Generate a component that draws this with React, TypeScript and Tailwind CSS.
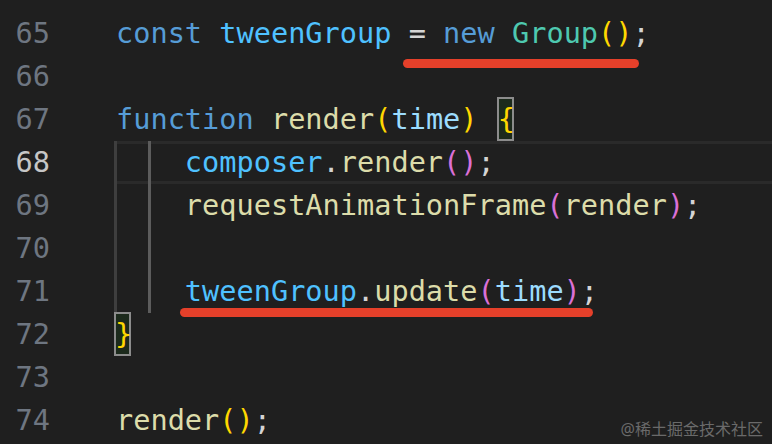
import React from "react";

type Tok = [string, string];

const C = {
  kw: "text-[#569cd6]",
  vr: "text-[#4fc1ff]",
  cls: "text-[#4ec9b0]",
  fn: "text-[#dcdcaa]",
  prm: "text-[#9cdcfe]",
  yl: "text-[#ffd700]",
  pu: "text-[#da70d6]",
  pn: "text-[#d4d4d4]",
};

type Line = {
  num: number;
  indent?: boolean;
  active?: boolean;
  tokens: Tok[];
  box?: number; // index of token that gets the bracket-match box
  mark?: string; // classes for the red underline
};

const lines: Line[] = [
  {
    num: 65,
    tokens: [
      ["const ", C.kw],
      ["tweenGroup", C.vr],
      [" = ", C.pn],
      ["new ", C.kw],
      ["Group", C.cls],
      ["()", C.yl],
      [";", C.pn],
    ],
    mark: "left-[289px] top-[47px] w-[236px]",
  },
  { num: 66, tokens: [] },
  {
    num: 67,
    tokens: [
      ["function ", C.kw],
      ["render", C.fn],
      ["(", C.yl],
      ["time", C.prm],
      [")", C.yl],
      [" ", C.pn],
      ["{", C.yl],
    ],
    box: 6,
  },
  {
    num: 68,
    indent: true,
    active: true,
    tokens: [
      ["composer", C.vr],
      [".", C.pn],
      ["render", C.fn],
      ["()", C.pu],
      [";", C.pn],
    ],
  },
  {
    num: 69,
    indent: true,
    tokens: [
      ["requestAnimationFrame", C.fn],
      ["(", C.pu],
      ["render", C.fn],
      [")", C.pu],
      [";", C.pn],
    ],
  },
  { num: 70, indent: true, tokens: [] },
  {
    num: 71,
    indent: true,
    tokens: [
      ["tweenGroup", C.vr],
      [".", C.pn],
      ["update", C.fn],
      ["(", C.pu],
      ["time", C.prm],
      [")", C.pu],
      [";", C.pn],
    ],
    mark: "left-[66px] top-[38px] w-[413px]",
  },
  { num: 72, tokens: [["}", C.yl]], box: 0 },
  { num: 73, tokens: [] },
  {
    num: 74,
    tokens: [
      ["render", C.fn],
      ["()", C.yl],
      [";", C.pn],
    ],
  },
];

function Guide({ color }: { color: string }) {
  return (
    <span
      className={`inline-block align-top h-[43px] w-[2ch] -ml-[2px] mr-[2px] border-l-[3px] ${color}`}
    />
  );
}

function CodeLine({ line }: { line: Line }) {
  return (
    <div className="flex h-[43px] leading-[43px]">
      <div
        className={`w-[50px] text-right ${
          line.active ? "text-[#c6c6c6]" : "text-[#6e7681]"
        }`}
      >
        {line.num}
      </div>
      <div
        className={`relative ml-[64px] flex-1 pl-[2px] whitespace-pre ${
          line.active
            ? "shadow-[inset_0_3px_0_#2a2a2a,inset_0_-3px_0_#2a2a2a]"
            : ""
        }`}
      >
        {line.indent && (
          <>
            <Guide color="border-[#3e3e3e]" />
            <Guide color="border-[#5c5c5c]" />
          </>
        )}
        {line.tokens.map(([text, cls], i) =>
          line.box === i ? (
            <span
              key={i}
              className={`inline-block align-top h-[44px] w-[1ch] -mt-[1px] leading-[41px] border-2 border-[#8c8c8c] bg-[#1c2a1c] ${cls} ${
                i === 0 ? "-ml-[2px]" : "ml-[2px]"
              }`}
            >
              <span className="-ml-[1px]">{text}</span>
            </span>
          ) : (
            <span key={i} className={cls}>
              {text}
            </span>
          )
        )}
        {line.mark && (
          <div
            className={`absolute z-10 h-[9px] rounded-full bg-[#e5402a] ${line.mark}`}
          />
        )}
      </div>
    </div>
  );
}

export default function App() {
  return (
    <div className="relative w-[772px] h-[444px] overflow-hidden bg-[#1f1f1f] font-['DejaVu_Sans_Mono',monospace] text-[28.6px]">
      <div className="pt-[12px]">
        {lines.map((l) => (
          <CodeLine key={l.num} line={l} />
        ))}
      </div>
      <div className="absolute right-[9px] bottom-[7px] leading-none text-[16px] text-[#6a6a6a] font-['Noto_Sans','Noto_Sans_CJK_SC',sans-serif]">
        @稀土掘金技术社区
      </div>
    </div>
  );
}
